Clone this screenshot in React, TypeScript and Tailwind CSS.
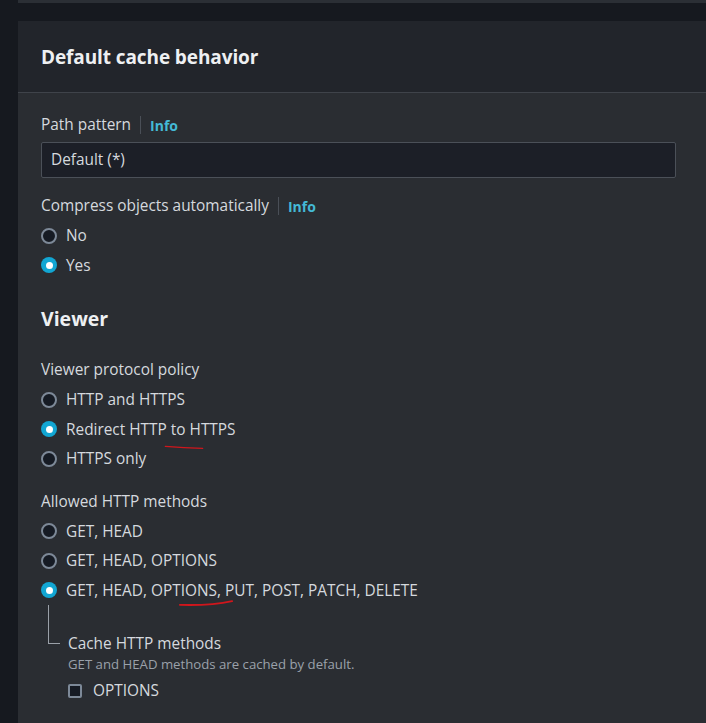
import React from "react";

const font = { fontFamily: '"Open Sans", "Noto Sans", sans-serif' };

interface RadioProps {
  label: string;
  checked?: boolean;
}

const Radio: React.FC<RadioProps> = ({ label, checked }) => {
  return (
    <div className="flex items-center h-[29.5px]">
      {checked ? (
        <span className="w-4 h-4 rounded-full bg-[#12a6d3] flex items-center justify-center shrink-0">
          <span className="w-[7px] h-[7px] rounded-full bg-white" />
        </span>
      ) : (
        <span className="w-4 h-4 rounded-full border-2 border-[#7d8998] bg-[#161b24] shrink-0" />
      )}
      <span className="ml-[9px] text-[15.4px] text-[#d5d9de]">{label}</span>
    </div>
  );
};

const Label: React.FC<{ text: string; info?: boolean }> = ({ text, info }) => (
  <div className="flex items-center text-[15.4px] text-[#d5d9de] h-[22px]">
    <span>{text}</span>
    {info && (
      <>
        <span className="mx-[9px] w-px h-[18px] bg-[#4a4f57]" />
        <span className="text-[#44b9d6] font-bold text-[14px]">Info</span>
      </>
    )}
  </div>
);

const Scribble: React.FC<{ className: string; d: string }> = ({ className, d }) => (
  <svg className={"absolute pointer-events-none " + className} viewBox="0 0 60 8" fill="none">
    <path d={d} stroke="#d0161c" strokeWidth="2" strokeLinecap="round" />
  </svg>
);

export default function App() {
  return (
    <div className="relative w-[706px] h-[723px] overflow-hidden bg-[#16191f]" style={font}>
      {/* top card remnant */}
      <div className="ml-[18px] h-[3px] bg-[#2b2f35]" />

      <div className="ml-[18px] mt-[18px] h-[702px] bg-[#2a2d32]">
        {/* header */}
        <div className="h-[72px] bg-[#22252b] border-b border-[#3f434a] flex items-center pl-[23px] pt-[2px]">
          <h2 className="text-[19px] font-bold text-[#eef0f2] tracking-[-0.1px]">Default cache behavior</h2>
        </div>

        <div className="pl-[23px] pr-[30px] pt-[21px]">
          <Label text="Path pattern" info />
          <div className="mt-[6px] h-[36px] w-[635px] bg-[#1c1f27] border border-[#4b5058] rounded-[2px] flex items-center px-[9px] text-[15.4px] text-[#d5d9de]">
            Default (*)
          </div>

          <div className="mt-[17px]">
            <Label text="Compress objects automatically" info />
          </div>
          <div className="mt-[4px]">
            <Radio label="No" />
            <Radio label="Yes" checked />
          </div>

          <h3 className="mt-[26px] text-[19.5px] font-bold text-[#eef0f2] h-[26px] leading-[26px]">Viewer</h3>

          <div className="mt-[27px]">
            <Label text="Viewer protocol policy" />
          </div>
          <div className="mt-[4px]">
            <Radio label="HTTP and HTTPS" />
            <Radio label="Redirect HTTP to HTTPS" checked />
            <Radio label="HTTPS only" />
          </div>

          <div className="mt-[17px]">
            <Label text="Allowed HTTP methods" />
          </div>
          <div className="mt-[4px]">
            <Radio label="GET, HEAD" />
            <Radio label="GET, HEAD, OPTIONS" />
            <Radio label="GET, HEAD, OPTIONS, PUT, POST, PATCH, DELETE" checked />
          </div>

          {/* nested cache methods */}
          <div className="flex">
            <div className="w-[27px] shrink-0 pl-[7px]">
              <div className="w-[12px] h-[39px] border-l border-b border-[#9aa0a8]" />
            </div>
            <div className="pt-[28px]">
              <div className="text-[15.4px] text-[#d5d9de] leading-[22px]">Cache HTTP methods</div>
              <div className="text-[13.2px] text-[#9aa1aa] leading-[18px]">GET and HEAD methods are cached by default.</div>
              <div className="mt-[6px] flex items-center">
                <span className="w-[14px] h-[14px] border-2 border-[#7d8998] bg-[#161b24] rounded-[2px]" />
                <span className="ml-[11px] text-[15.4px] text-[#d5d9de]">OPTIONS</span>
              </div>
            </div>
          </div>
        </div>
      </div>

      <Scribble className="left-[164px] top-[443px] w-[40px] h-[8px]" d="M2 3 Q 30 5 58 6" />
      <Scribble className="left-[178px] top-[599px] w-[56px] h-[8px]" d="M2 6 Q 35 7 58 2" />
    </div>
  );
}
